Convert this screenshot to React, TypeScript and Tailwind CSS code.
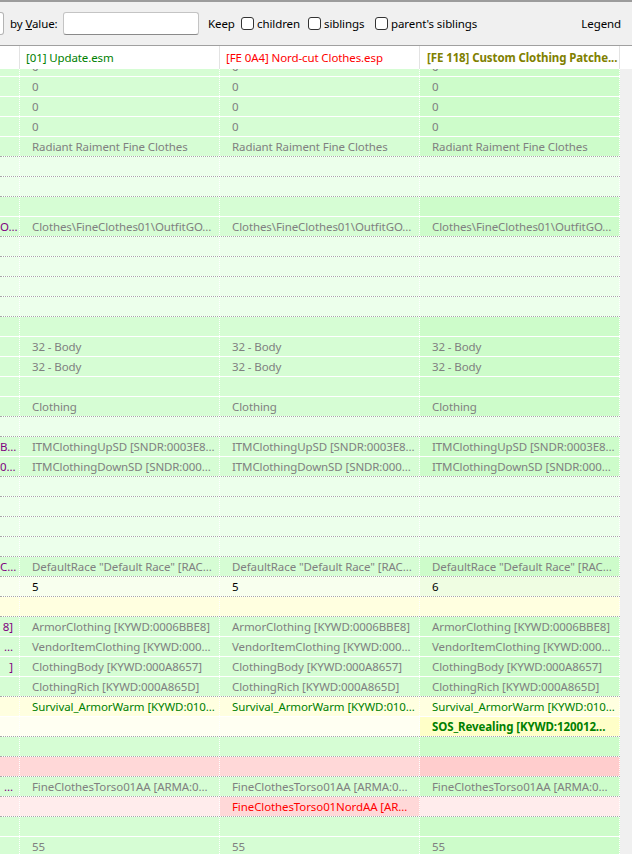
type Kind = 'G' | 'L' | 'Y' | 'YL' | 'C' | 'R' | 'P';
type Tone = 'gray' | 'black' | 'green' | 'greenBold' | 'red';

type Row = {
  k: Kind;
  c0?: string;
  v?: [string, string, string];
  tone?: Tone;
  bg2?: string;
  bg3?: string;
};

const kindBg: Record<Kind, [string, string]> = {
  G: ['bg-[#d6fdd4]', 'bg-[#cdfcca]'],
  L: ['bg-[#ecffeb]', 'bg-[#ecffeb]'],
  Y: ['bg-[#ffffe0]', 'bg-[#ffffe0]'],
  YL: ['bg-[#fffff2]', 'bg-[#fffff2]'],
  C: ['bg-[#f8ffee]', 'bg-[#effde2]'],
  R: ['bg-[#ffd8d8]', 'bg-[#ffcdcd]'],
  P: ['bg-[#ffecec]', 'bg-[#ffecec]'],
};

const toneCls: Record<Tone, string> = {
  gray: 'text-[#808080]',
  black: 'text-black',
  green: 'text-[#008000]',
  greenBold: 'text-[#008000] font-bold',
  red: 'text-[#ff0000]',
};

const same = (s: string): [string, string, string] => [s, s, s];

const rows: Row[] = [
  { k: 'G', v: same('0') },
  { k: 'G', v: same('0') },
  { k: 'G', v: same('0') },
  { k: 'G', v: same('0') },
  { k: 'G', v: same('Radiant Raiment Fine Clothes') },
  { k: 'L' },
  { k: 'L' },
  { k: 'G' },
  { k: 'G', c0: 'O...', v: same('Clothes\\FineClothes01\\OutfitGO...') },
  { k: 'L' },
  { k: 'L' },
  { k: 'L' },
  { k: 'L' },
  { k: 'G' },
  { k: 'G', v: same('32 - Body') },
  { k: 'G', v: same('32 - Body') },
  { k: 'G' },
  { k: 'G', v: same('Clothing') },
  { k: 'L' },
  { k: 'G', c0: 'B...', v: same('ITMClothingUpSD [SNDR:0003E8...') },
  { k: 'G', c0: '0...', v: same('ITMClothingDownSD [SNDR:000...') },
  { k: 'L' },
  { k: 'L' },
  { k: 'L' },
  { k: 'L' },
  { k: 'G', c0: 'C...', v: same('DefaultRace "Default Race" [RAC...') },
  { k: 'C', v: ['5', '5', '6'], tone: 'black' },
  { k: 'Y' },
  { k: 'G', c0: '8]', v: same('ArmorClothing [KYWD:0006BBE8]') },
  { k: 'G', c0: '...', v: same('VendorItemClothing [KYWD:000...') },
  { k: 'G', c0: ']', v: same('ClothingBody [KYWD:000A8657]') },
  { k: 'G', v: same('ClothingRich [KYWD:000A865D]') },
  { k: 'Y', v: same('Survival_ArmorWarm [KYWD:010...'), tone: 'green' },
  { k: 'YL', v: ['', '', 'SOS_Revealing [KYWD:120012...'], tone: 'greenBold', bg3: 'bg-[#ffffc8]' },
  { k: 'G' },
  { k: 'R' },
  { k: 'G', c0: '...', v: same('FineClothesTorso01AA [ARMA:0...') },
  { k: 'P', v: ['', 'FineClothesTorso01NordAA [AR...', ''], tone: 'red', bg2: 'bg-[#ffd8d8]' },
  { k: 'G' },
  { k: 'G', v: same('55') },
];

const family = (k?: Kind) => (k === 'G' ? 'G' : k === 'Y' || k === 'YL' ? 'Y' : k);

function Checkbox({ label }: { label: string }) {
  return (
    <label className="flex items-center gap-[3px]">
      <span className="w-[13px] h-[13px] rounded-[3px] border border-[#333333] bg-white" />
      <span>{label}</span>
    </label>
  );
}

function DataRow({ row, next }: { row: Row; next?: Row }) {
  const [bg, bg3] = kindBg[row.k];
  const line =
    next && family(row.k) === family(next.k) && (family(row.k) === 'G' || family(row.k) === 'Y')
      ? 'border-white'
      : 'border-[#a8a8a8]';
  const tone = toneCls[row.tone ?? 'gray'];
  const v = row.v ?? same('');
  return (
    <div className="flex h-[20px]">
      <div className={`flex w-[620px] border-b border-dotted ${line}`}>
        <div className={`w-[20px] shrink-0 overflow-hidden whitespace-nowrap text-right pr-[6px] leading-[19px] text-[#800080] border-r border-dotted border-white ${bg}`}>
          {row.c0}
        </div>
        <div className={`w-[200px] shrink-0 overflow-hidden whitespace-nowrap pl-[12px] pr-[4px] leading-[19px] border-r border-dotted border-white ${bg} ${tone}`}>
          {v[0]}
        </div>
        <div className={`w-[200px] shrink-0 overflow-hidden whitespace-nowrap pl-[12px] pr-[4px] leading-[19px] border-r border-dotted border-white ${row.bg2 ?? bg} ${tone}`}>
          {v[1]}
        </div>
        <div className={`w-[200px] shrink-0 overflow-hidden whitespace-nowrap pl-[12px] pr-[4px] leading-[19px] border-r border-dotted border-white ${row.bg3 ?? bg3} ${tone}`}>
          {v[2]}
        </div>
      </div>
      <div className="w-[12px] shrink-0 bg-[#f0f0f0]" />
    </div>
  );
}

export default function App() {
  return (
    <div className="w-[632px] h-[854px] overflow-hidden bg-white font-['Noto_Sans',sans-serif] text-[11.5px] tracking-[-0.1px] text-black flex flex-col">
      {/* filter toolbar */}
      <div className="h-[46px] shrink-0 bg-[#f0f0f0] border-t-2 border-t-[#9c9c9c] border-b border-b-[#a0a0a0] flex items-center">
        <div className="w-[4px] h-[23px] bg-white border border-l-0 border-[#b4b4b4] rounded-r-[3px]" />
        <span className="ml-[6px] w-[53px]">
          by <span className="underline">V</span>alue:
        </span>
        <div className="w-[136px] h-[23px] bg-white border border-[#c4c4c4] border-b-[#8a8a8a] rounded-[3px]" />
        <div className="ml-[9px] flex items-center">
          <span className="w-[33px]">Keep</span>
          <div className="w-[67px]">
            <Checkbox label="children" />
          </div>
          <div className="w-[67px]">
            <Checkbox label="siblings" />
          </div>
          <Checkbox label="parent's siblings" />
        </div>
        <span className="ml-auto mr-[11px]">Legend</span>
      </div>

      {/* column header */}
      <div className="h-[23px] shrink-0 flex bg-white">
        <div className="w-[20px] border-r border-[#e3e3e3]" />
        <div className="w-[200px] border-r border-[#e3e3e3] pl-[6px] leading-[23px] whitespace-nowrap overflow-hidden text-[#008000]">
          [01] Update.esm
        </div>
        <div className="w-[200px] border-r border-[#e3e3e3] pl-[6px] leading-[23px] whitespace-nowrap overflow-hidden text-[#ff0000]">
          [FE 0A4] Nord-cut Clothes.esp
        </div>
        <div className="w-[200px] border-r border-[#e3e3e3] pl-[7px] leading-[23px] whitespace-nowrap overflow-hidden text-[#808000] font-bold">
          [FE 118] Custom Clothing Patche...
        </div>
        <div className="flex-1" />
      </div>

      {/* record rows, scrolled */}
      <div className="flex-1 overflow-hidden">
        <div className="-mt-[12px]">
          {rows.map((r, i) => (
            <DataRow key={i} row={r} next={rows[i + 1]} />
          ))}
        </div>
      </div>
    </div>
  );
}
